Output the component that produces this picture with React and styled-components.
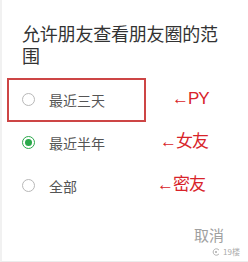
import { createGlobalStyle, styled, css } from "styled-components";

const OPTIONS = [
  { label: "最近三天", note: "←PY", noteAt: 172, boxed: true },
  { label: "最近半年", note: "←女友", noteAt: 160, checked: true },
  { label: "全部", note: "←密友", noteAt: 157 },
];

export default function App () {
  return (
    <>
      <GlobalStyle />
      <Dialog >
        <Title >允许朋友查看朋友圈的范围</Title>
        <OptionList >
          {OPTIONS.map((opt) => (
            <Option key={opt.label} $boxed={opt.boxed} >
              <Radio $checked={opt.checked} />
              <OptionLabel >{opt.label}</OptionLabel>
              <Note $left={opt.noteAt} >{opt.note}</Note>
            </Option>
          ))}
        </OptionList>
        <Footer >
          <CancelBtn type="button" >取消</CancelBtn>
        </Footer>
        <Watermark >
          <svg width="9" height="8" viewBox="0 0 9 8" >
            <path d="M7 2.2A3.2 3.2 0 1 0 7 5.8" fill="none" stroke="#aaa" strokeWidth="0.9" />
            <circle cx="4" cy="4" r="1" fill="#aaa" />
          </svg>
          19楼
        </Watermark>
      </Dialog>
    </>
  );
}

const GlobalStyle = createGlobalStyle`
  html, body {
    margin: 0;
    background: #fff;
  }

  body {
    font-family: "Noto Sans CJK SC", "Noto Sans", sans-serif;
  }
`;

const Dialog = styled.div`
  background: #fff;
  border-bottom: 1px solid #ececec;
  border-left: 2px solid #f1f1f1;
  box-sizing: border-box;
  display: flex;
  flex-direction: column;
  height: 262px;
  overflow: hidden;
  width: 248px;
`;

const Title = styled.h1`
  color: #333;
  font-size: 18px;
  font-weight: 400;
  letter-spacing: -0.2px;
  line-height: 22px;
  margin: 0;
  padding: 22px 26px 0 20px;
`;

const OptionList = styled.div`
  display: flex;
  flex-direction: column;
  margin-top: 12px;
`;

const Option = styled.div`
  align-items: center;
  display: flex;
  gap: 14px;
  height: 43px;
  padding-left: 20px;
  position: relative;

  ${({ $boxed }) => $boxed && css`
    &::before {
      border: 2px solid #cd4545;
      box-sizing: border-box;
      content: "";
      height: 44px;
      left: 5px;
      position: absolute;
      top: -0.5px;
      width: 139px;
    }
  `}
`;

const Radio = styled.span`
  border: 1.5px solid ${({ $checked }) => ($checked ? "#2aa84a" : "#b8b8b8")};
  border-radius: 50%;
  box-sizing: border-box;
  flex: none;
  height: 13px;
  position: relative;
  width: 13px;

  ${({ $checked }) => $checked && css`
    &::after {
      background: #2aa84a;
      border-radius: 50%;
      content: "";
      height: 7px;
      left: 1.5px;
      position: absolute;
      top: 1.5px;
      width: 7px;
    }
  `}
`;

const OptionLabel = styled.span`
  color: #555;
  font-size: 14px;
  line-height: 20px;
`;

const Note = styled.span`
  color: #d8232a;
  font-family: "Liberation Sans", "Noto Sans CJK SC", sans-serif;
  font-size: 17px;
  left: ${({ $left }) => $left - 2}px;
  letter-spacing: -1px;
  line-height: 20px;
  position: absolute;
  top: 11px;
`;

const Footer = styled.div`
  display: flex;
  justify-content: flex-end;
  margin-top: 18px;
  padding-right: 24px;
`;

const CancelBtn = styled.button`
  background: transparent;
  border: none;
  color: #a0a0a0;
  font-family: inherit;
  font-size: 15px;
  line-height: 20px;
  padding: 0;
`;

const Watermark = styled.div`
  align-items: center;
  align-self: flex-end;
  color: #aaa;
  display: flex;
  font-size: 8px;
  gap: 2px;
  line-height: 10px;
  margin-top: 2px;
  padding-right: 8px;
`;
